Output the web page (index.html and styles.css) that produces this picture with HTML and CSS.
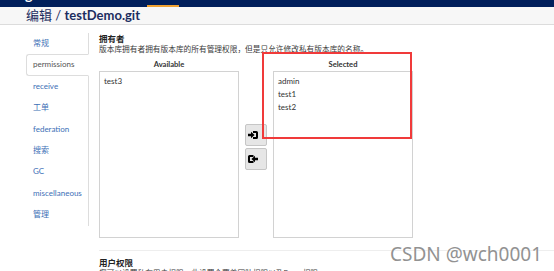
FILE: index.html
```html
<!DOCTYPE html>
<html lang="zh">
<head>
  <meta charset="UTF-8">
  <link rel="stylesheet" href="styles.css">
  <title>编辑 / testDemo.git</title>
</head>
<body>
  <div class="navbar">
    <span class="brand">gitblit</span>
    <span class="nav-link active"></span>
  </div>
  <div class="titlebar">
    <h2 class="title">编辑 / <b>testDemo.git</b></h2>
  </div>

  <div class="page">
    <ul class="tabs">
      <li>常规</li>
      <li class="active">permissions</li>
      <li>receive</li>
      <li>工单</li>
      <li>federation</li>
      <li>搜索</li>
      <li>GC</li>
      <li>miscellaneous</li>
      <li>管理</li>
    </ul>

    <div class="content">
      <h4 class="section-title">拥有者</h4>
      <p class="section-desc">版本库拥有者拥有版本库的所有管理权限，但是只允许修改私有版本库的名称。</p>

      <div class="picker">
        <div class="picker-head">Available</div>
        <div></div>
        <div class="picker-head">Selected</div>

        <ul class="picker-list">
          <li>test3</li>
        </ul>
        <div class="picker-buttons">
          <button class="btn" type="button">
            <svg width="10" height="8" viewBox="0 0 10 8"><path d="M5 0H8.4Q10 0 10 1.6V6.4Q10 8 8.4 8H5V6.1H8V1.9H5Z"/><path d="M0 2.7H3V0.8L6.6 4L3 7.2V5.3H0Z"/></svg>
          </button>
          <button class="btn" type="button">
            <svg width="10" height="8" viewBox="0 0 10 8"><path d="M5.5 0H1.6Q0 0 0 1.6V6.4Q0 8 1.6 8H5.5V6.1H2V1.9H5.5Z"/><path d="M10 2.7H7V0.8L3.4 4L7 7.2V5.3H10Z"/></svg>
          </button>
        </div>
        <ul class="picker-list">
          <li>admin</li>
          <li>test1</li>
          <li>test2</li>
        </ul>
      </div>

      <div class="section next">
        <h4 class="section-title">用户权限</h4>
        <p class="section-desc">您可以设置私有用户权限，此设置会覆盖团队权限以及Proxy权限。</p>
      </div>
    </div>
  </div>

  <div class="mark"></div>
  <div class="watermark">CSDN @wch0001</div>
</body>
</html>
```

FILE: styles.css
```css
*{margin:0;padding:0;box-sizing:border-box}
body{
	font-family:Lato,"Noto Sans CJK SC",sans-serif;
	color:#333;
	background:#fff;
	overflow:hidden;
	height:271px;
	position:relative;
}
ul{list-style:none}

/* top bar */
.navbar{
	height:7px;
	background:#001f5b;
	display:flex;
	overflow:hidden;
	padding-left:25px;
}
.brand{
	width:122px;
	color:#fff;
	font-weight:bold;
	font-size:14px;
	line-height:14px;
	margin-top:-12px;
}
.nav-link{width:32px}
.nav-link.active{border-bottom:2px solid #f0a232}

.titlebar{
	height:18px;
	background:#f7f7f7;
	border-bottom:1px solid #dcdcdc;
	padding-left:26px;
}
.title{
	font-size:13px;
	line-height:17px;
	color:#1c2d60;
	font-weight:normal;
}
.title b{font-weight:bold}

/* body */
.page{
	display:flex;
	padding-left:26px;
}
.tabs{
	width:63px;
	margin-top:8px;
	border-right:1px solid #ddd;
	align-self:flex-start;
}
.tabs li{
	font-size:8px;
	line-height:11.4px;
	padding:4px 6px;
	border:1px solid transparent;
	color:#3c6fb6;
	white-space:nowrap;
}
.tabs li.active{
	color:#555;
	background:#fff;
	border-color:#ddd;
	border-right-color:#fff;
	border-radius:3px 0 0 3px;
	margin-right:-1px;
}

.content{
	flex:1;
	margin-left:10px;
	padding-top:9px;
}
.section-title{
	font-size:8.5px;
	line-height:10px;
	font-weight:bold;
	color:#222;
}
.section-desc{
	font-size:7.7px;
	line-height:10px;
	color:#3a3a3a;
}

.picker{
	display:grid;
	grid-template-columns:140px 22px 140px;
	column-gap:6px;
	margin-top:5px;
}
.picker-head{
	font-size:7.6px;
	line-height:10px;
	font-weight:bold;
	text-align:center;
	color:#333;
	margin-bottom:2px;
}
.picker-list{
	height:167px;
	border:1px solid #d2d2d2;
	padding:3px 4px;
}
.picker-list li{
	font-size:8px;
	line-height:13px;
	color:#333;
}
.picker-buttons{
	display:flex;
	flex-direction:column;
	gap:2px;
	padding-top:53px;
}
.btn{
	width:22px;
	height:22px;
	background:#e6e6e6;
	border:1px solid #c6c6c6;
	border-radius:2px;
	display:flex;
	align-items:center;
	padding-left:2px;
}
.btn svg{fill:#000;display:block}

.next{
	margin-top:12px;
	border-top:1px solid #eee;
	padding-top:7px;
}

/* overlays */
.mark{
	position:absolute;
	left:262px;
	top:52px;
	width:150px;
	height:87px;
	border:2px solid #f03a3a;
}
.watermark{
	position:absolute;
	left:390px;
	top:241px;
	font-family:"Noto Sans",sans-serif;
	font-size:19px;
	color:#929292;
	text-shadow:0 0 2px #fff;
	white-space:nowrap;
}
```
